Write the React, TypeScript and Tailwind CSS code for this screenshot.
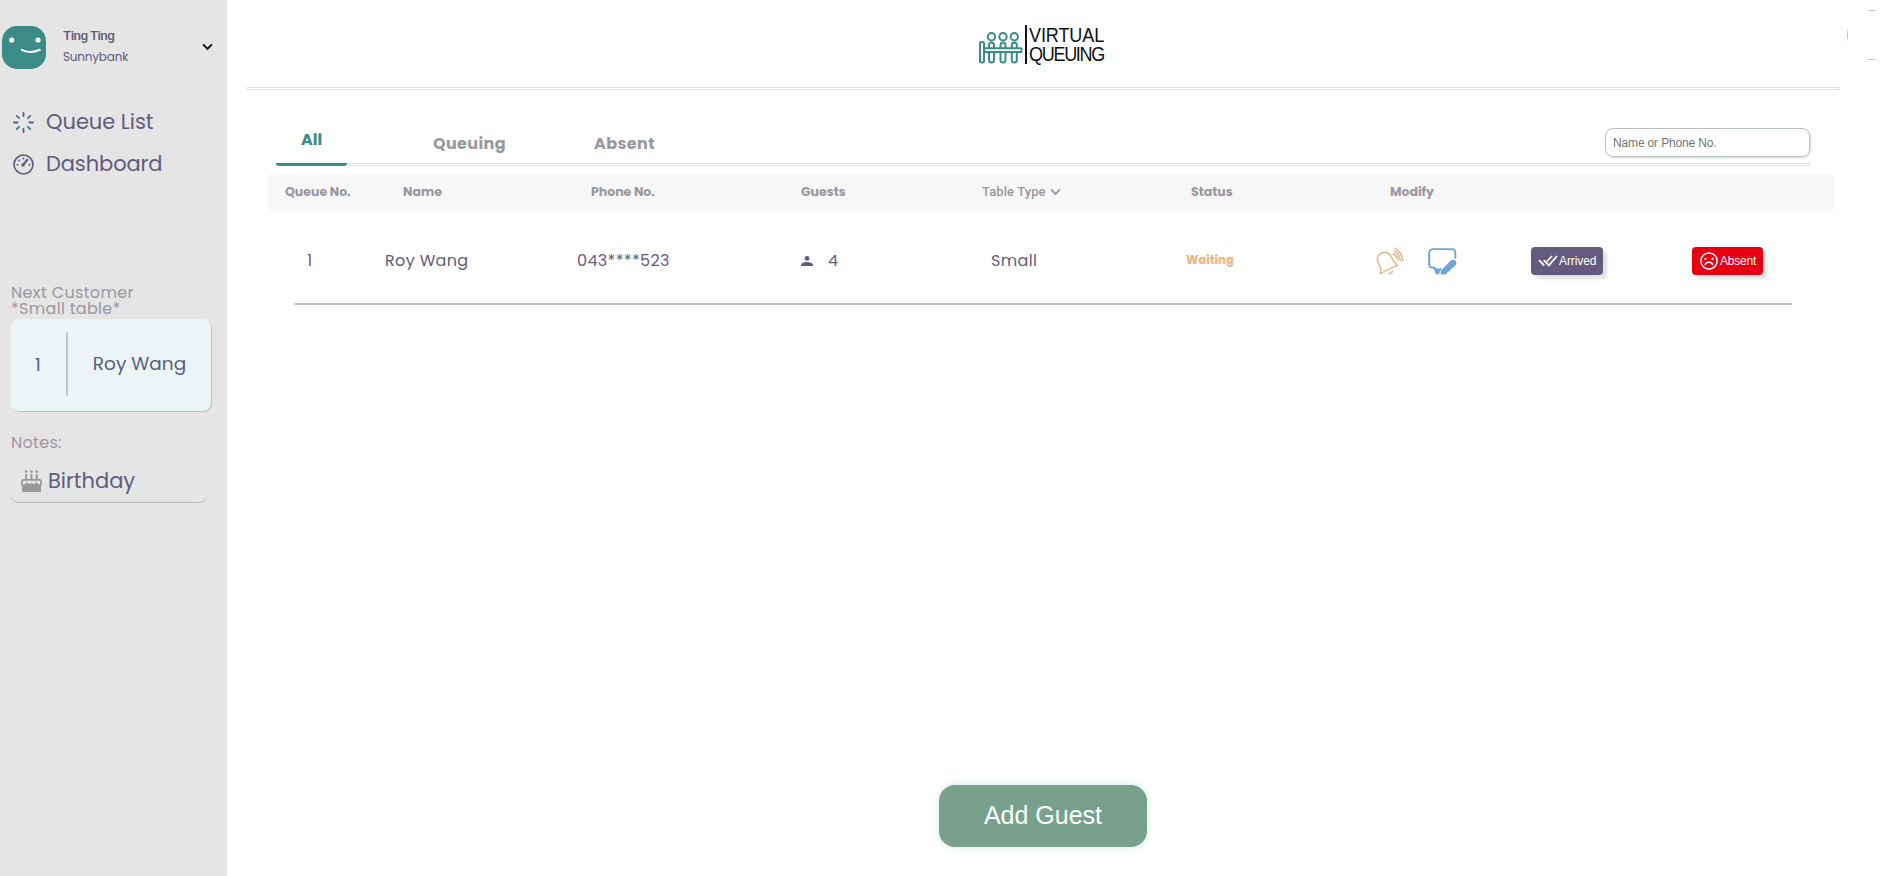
import React from "react";

const pop = "font-[Poppins,Inter,sans-serif] [font-feature-settings:'cv11','ss03'] whitespace-nowrap";

function Avatar() {
  return (
    <svg width="44" height="44" viewBox="0 0 44 44" className="shrink-0">
      <rect width="44" height="43" rx="15" fill="#3b8c87" />
      <circle cx="9.7" cy="14" r="2.6" fill="#fff" />
      <circle cx="36" cy="14" r="2.6" fill="#fff" />
      <path d="M19 23.5q9 5 19.500 0" fill="none" stroke="#fff" strokeWidth="2" />
    </svg>
  );
}

function Chevron({ size, color }: { size: number; color: string }) {
  return (
    <svg width={size} height={size * 0.7} viewBox="0 0 12 8" fill="none" stroke={color} strokeWidth="2.200">
      <path d="M1.200 1.300L6 6.200l4.800-4.900" />
    </svg>
  );
}

function Spinner() {
  return (
    <svg width="21" height="21" viewBox="0 0 21 21" stroke="#625b7e" strokeWidth="1.900" strokeLinecap="round" className="shrink-0">
      <path d="M10.500 1v3M10.500 17v3M1 10.500h3.500M16.500 10.500H20" />
      <path stroke="#4b7b7d" d="M3.800 3.800l2.300 2.300M14.900 14.900l2.300 2.300M3.800 17.200l2.300-2.300M14.900 6.100l2.300-2.300" />
    </svg>
  );
}

function Gauge() {
  return (
    <svg width="21" height="21" viewBox="0 0 21 21" fill="none" stroke="#625b7e" className="shrink-0">
      <circle cx="10.500" cy="10.500" r="9.500" strokeWidth="1.700" />
      <path d="M10.300 10.800l4-5" strokeWidth="2.200" strokeLinecap="round" />
      <g fill="#625b7e" stroke="none">
        <circle cx="4.500" cy="10.700" r="1" />
        <circle cx="16.500" cy="10.700" r="1" />
        <circle cx="6.200" cy="6.500" r="1" />
        <circle cx="10.400" cy="4.600" r="1" />
        <circle cx="10" cy="11" r="1.700" />
      </g>
    </svg>
  );
}

function Cake() {
  return (
    <svg width="21" height="22" viewBox="0 0 21 22" className="shrink-0">
      <g fill="#9a979f">
        <path d="M4.200 4h1.900v6H4.200zM9.500 4h1.900v6H9.500zM14.800 4h1.900v6h-1.900z" />
        <circle cx="5.200" cy="1.600" r="1.300" />
        <circle cx="10.500" cy="1.600" r="1.300" />
        <circle cx="15.800" cy="1.600" r="1.300" />
        <path d="M3 9h15a3 3 0 0 1 3 3v2.500l-1 1.500v5a1 1 0 0 1-1 1H2a1 1 0 0 1-1-1v-5l-1-1.500V12a3 3 0 0 1 3-3z" />
      </g>
      <path d="M1.700 14V12q0-1.300 1.300-1.300h15q1.300 0 1.300 1.300v2q-1.700 1.200-3.300-1.300-2.300-.5-2.700 1.300-1.500 0-2.800-1.600-1.300 1.600-2.800 1.600-.4-1.800-2.700-1.300-1.600 2.500-3.300 1.300z" fill="#e5e5e5" />
    </svg>
  );
}

function Logo() {
  return (
    <div className="flex h-10 items-start">
      <svg width="44" height="40" viewBox="0 0 44 40" fill="none" stroke="#3b8c87" strokeWidth="2">
        {[12.5, 24, 35.3].map((x) => (
          <g key={x}>
            <circle cx={x} cy="11.700" r="3.700" />
            <path d={`M${x - 2.5} 23v-3a2.500 2.500 0 0 1 5 0v3M${x - 2.5} 27.500v7.500a2.500 2.500 0 0 0 5 0v-7.500`} />
          </g>
        ))}
        <rect x="1" y="17" width="4" height="20.500" rx="1.200" />
        <rect x="5" y="23.200" width="37.500" height="3.800" rx="0.600" />
      </svg>
      <div className="ml-[2px] h-[39px] w-0.5 bg-[#15102a]" />
      <div className="ml-0.5 flex flex-col font-['Liberation_Sans',sans-serif] text-[21px] leading-[19px] text-[#111]">
        <span className="w-[77px] origin-left scale-x-[0.860] tracking-[-0.150px]">VIRTUAL</span>
        <span className="w-[77px] origin-left scale-x-[0.860] tracking-[-1.550px]">QUEUING</span>
      </div>
    </div>
  );
}

function Bell() {
  return (
    <svg width="28" height="29" viewBox="0 0 28 29" fill="none" stroke="#ebb88c" strokeWidth="1.600" strokeLinecap="round" strokeLinejoin="round">
      <path d="M4.300 26.600l.6-5.400L1.800 14.500C-.2 9 4.500 5.300 9 5.400c4.500.1 6.500 3.700 8 7.600l4.300 5.300z" />
      <path d="M13 26.500q3-.2 3.300-2.200M17.300 6.700q3.800 2 4.500 6.500M19 1.200q7 4.500 7.700 12M18.500 4q5 3.500 5.800 9.500" />
    </svg>
  );
}

function Note() {
  return (
    <svg width="29" height="27" viewBox="0 0 30 28">
      <path d="M13.500 21L9 25.800 6.600 20.500H5Q1.200 20.500 1.200 16.500V5.200Q1.200 1.200 5.200 1.200H24.500Q28.300 1.200 28.300 5.200V11" fill="none" stroke="#6aa5de" strokeWidth="2" />
      <path d="M6.500 21h4l1 2.500 2-2.500-1.800 5.500Q9.500 28 7.800 26.300z" fill="#6aa5de" />
      <path d="M13.200 27.500v-4L24 12.800q2.200-1.300 4.500.3 1.600 2 .2 4.600L18 27.500z" fill="#6aa5de" />
    </svg>
  );
}

function DoubleCheck() {
  return (
    <svg width="20" height="12" viewBox="0 0 20 12" fill="none" stroke="#fff" strokeWidth="1.800">
      <path d="M1 5.200L6.200 10.500M5.700 5.200l5.200 5.200L19 1M8.900 6.500L14 1" />
    </svg>
  );
}

function SadFace() {
  return (
    <svg width="18" height="18" viewBox="0 0 18 18" fill="none" stroke="#fff" strokeWidth="1.500">
      <circle cx="9" cy="9" r="8.100" />
      <circle cx="5.500" cy="6.900" r="1.150" fill="#fff" stroke="none" />
      <circle cx="12.500" cy="6.900" r="1.150" fill="#fff" stroke="none" />
      <path d="M5.200 13.300q.3-3 3.800-3t3.800 3" />
    </svg>
  );
}

function Sidebar() {
  return (
    <aside className="h-full w-[227px] shrink-0 bg-[#e5e5e5] text-[#625b7e]">
      <div className="flex h-[101px] items-start pt-[26px] pl-0.5">
        <Avatar />
        <div className="ml-[17px] w-[139px]">
          <div className="font-[Roboto,sans-serif] text-[13.500px] leading-[19px] font-medium tracking-[-0.600px]">Ting Ting</div>
          <div className={`${pop} pt-0.5 text-[12px] leading-[20px] tracking-[-0.200px]`}>Sunnybank</div>
        </div>
        <div className="pt-[17px]">
          <Chevron size={11} color="#111" />
        </div>
      </div>
      <nav className="flex flex-col pl-[13px]">
        <a className="flex h-[42px] items-center gap-3">
          <Spinner />
          <span className={`${pop} text-[21px] font-[370] tracking-[-0.050px]`}>Queue List</span>
        </a>
        <a className="flex h-[42px] items-center gap-3">
          <Gauge />
          <span className={`${pop} text-[21px] font-[370] tracking-[-0.100px]`}>Dashboard</span>
        </a>
      </nav>
      <section className="pt-[100px] pl-[11px]">
        <div className={`${pop} text-[16px] leading-4 text-[#9a979f]`}>
          <div className="tracking-[0.350px]">Next Customer</div>
          <div className="tracking-[0.300px]">*Small table*</div>
        </div>
        <div className="mt-[2px] flex h-[92px] w-[200px] items-center rounded-lg bg-[#ecf5f5] pb-0.5 shadow-[1px_1px_0_#b9c0c4]">
          <div className={`${pop} w-[55px] pl-6 text-[18px]`}>1</div>
          <div className="h-16 w-0.5 bg-[#bfc4c8]" />
          <div className={`${pop} flex-1 text-center text-[18.500px] font-[370]`}>Roy Wang</div>
        </div>
        <div className={`${pop} mt-[22px] text-[16px] leading-5 tracking-[0.300px] text-[#9a979f]`}>Notes:</div>
        <div className="mt-[11px] flex h-[38px] w-[196px] items-center gap-1.5 rounded-lg bg-[#e4e6e5] pb-1 pl-2.5 shadow-[0_1px_0_#b9c0c4]">
          <Cake />
          <span className={`${pop} text-[21px] font-[370]`}>Birthday</span>
        </div>
      </section>
    </aside>
  );
}

const th = `${pop} text-[12.500px] font-bold`;
const td = `${pop} text-[16px] text-[#625b7e] tracking-[0.350px] font-[370]`;

export default function App() {
  return (
    <div className="flex h-[876px] w-[1893px] overflow-hidden bg-white">
      <Sidebar />
      <main className="relative flex-1">
        <div className="flex h-[87px] pt-[25px] pl-[752px]">
          <Logo />
        </div>
        <div className="ml-5 h-[3px] w-[1593px] border border-[#e2e2e2]" />

        <div className="ml-[49px] flex h-[73px] w-[1534px] items-end text-[#9a979f]">
          <div className={`${pop} w-[71px] pb-[13px] text-center text-[16px] leading-5 font-bold text-[#3b8c87]`}>All</div>
          <div className={`${pop} ml-[86px] w-[161px] pb-[9px] text-[16px] leading-5 font-bold tracking-[0.350px]`}>Queuing</div>
          <div className={`${pop} flex-1 pb-[9px] text-[16px] leading-5 font-bold tracking-[0.400px]`}>Absent</div>
          <input
            placeholder="Name or Phone No."
            className="mb-1.5 h-[29px] w-[205px] rounded-lg border border-[#b9c0c4] px-[7px] font-['Liberation_Sans',sans-serif] text-[12px] tracking-[-0.150px] shadow-[1px_1px_2px_#ccdada] placeholder:text-[#757575]"
          />
        </div>
        <div className="ml-[49px] flex h-[3px] w-[1534px]">
          <div className="w-[71px] rounded-b-sm bg-[#3b8c87]" />
          <div className="flex-1 border border-l-0 border-[#e2e2e2]" />
        </div>

        <div className="mt-2 ml-[41px] flex h-[37px] w-[1567px] items-center rounded bg-[#f7f7f7] pl-[17px] text-[#9a979f]">
          <div className={`${th} w-[118px]`}>Queue No.</div>
          <div className={`${th} w-[188px]`}>Name</div>
          <div className={`${th} w-[210px]`}>Phone No.</div>
          <div className={`${th} w-[181px]`}>Guests</div>
          <div className="flex w-[209px] items-center gap-1 pb-0.5 font-[Roboto,sans-serif] text-[13px] font-medium tracking-[0.100px]">
            Table Type <Chevron size={11} color="#9a979f" />
          </div>
          <div className={`${th} w-[199px]`}>Status</div>
          <div className={th}>Modify</div>
        </div>

        <div className="ml-[67px] flex h-[94px] w-[1498px] items-center border-b-2 border-[#bfc4c8] pt-2">
          <div className={`${td} w-[91px] pl-[13px]`}>1</div>
          <div className={`${td} w-[192px]`}>Roy Wang</div>
          <div className={`${td} w-[224px]`}>043****523</div>
          <div className={`${td} flex w-[190px] items-center gap-[15px]`}>
            <svg width="12" height="10" viewBox="0 0 12 10" fill="#625b7e">
              <circle cx="6" cy="2.400" r="2.400" />
              <path d="M0 10V8.500Q1 6 6 6t6 2.500V10z" />
            </svg>
            4
          </div>
          <div className={`${td} w-[195px]`}>Small</div>
          <div className={`${pop} w-[190px] text-[11.500px] font-extrabold text-[#ebb88c]`}>Waiting</div>
          <div className="w-[52px]"><Bell /></div>
          <div className="w-[103px]"><Note /></div>
          <button className="flex h-7 w-[72px] items-center gap-px rounded bg-[#625b7e] pl-[7px] font-['Liberation_Sans',sans-serif] text-[12px] tracking-[-0.100px] text-white shadow-[4px_4px_3px_#e0e3e3]">
            <DoubleCheck />
            Arrived
          </button>
          <button className="ml-[89px] flex h-7 w-[71px] items-center gap-0.5 rounded bg-[#e60012] pl-2 font-['Liberation_Sans',sans-serif] text-[12px] tracking-[-0.200px] text-white shadow-[4px_4px_3px_#e0e3e3]">
            <SadFace />
            Absent
          </button>
        </div>

        <button className="mt-[480px] ml-[712px] flex h-[62px] w-[208px] items-center justify-center rounded-[16px] bg-[#78a18d] font-['Liberation_Sans',sans-serif] text-[25px] text-white shadow-[0_0_4px_3px_#edf5f5]">
          Add Guest
        </button>

        <div className="absolute top-[10px] left-[1638px] h-px w-[14px] bg-linear-to-r from-transparent via-[#b5b5b5] to-transparent" />
        <div className="absolute top-[28px] left-[1620px] h-[14px] w-px bg-linear-to-b from-transparent via-[#b5b5b5] to-transparent" />
        <div className="absolute top-[59px] left-[1638px] h-px w-[14px] bg-linear-to-r from-transparent via-[#b5b5b5] to-transparent" />
      </main>
    </div>
  );
}
